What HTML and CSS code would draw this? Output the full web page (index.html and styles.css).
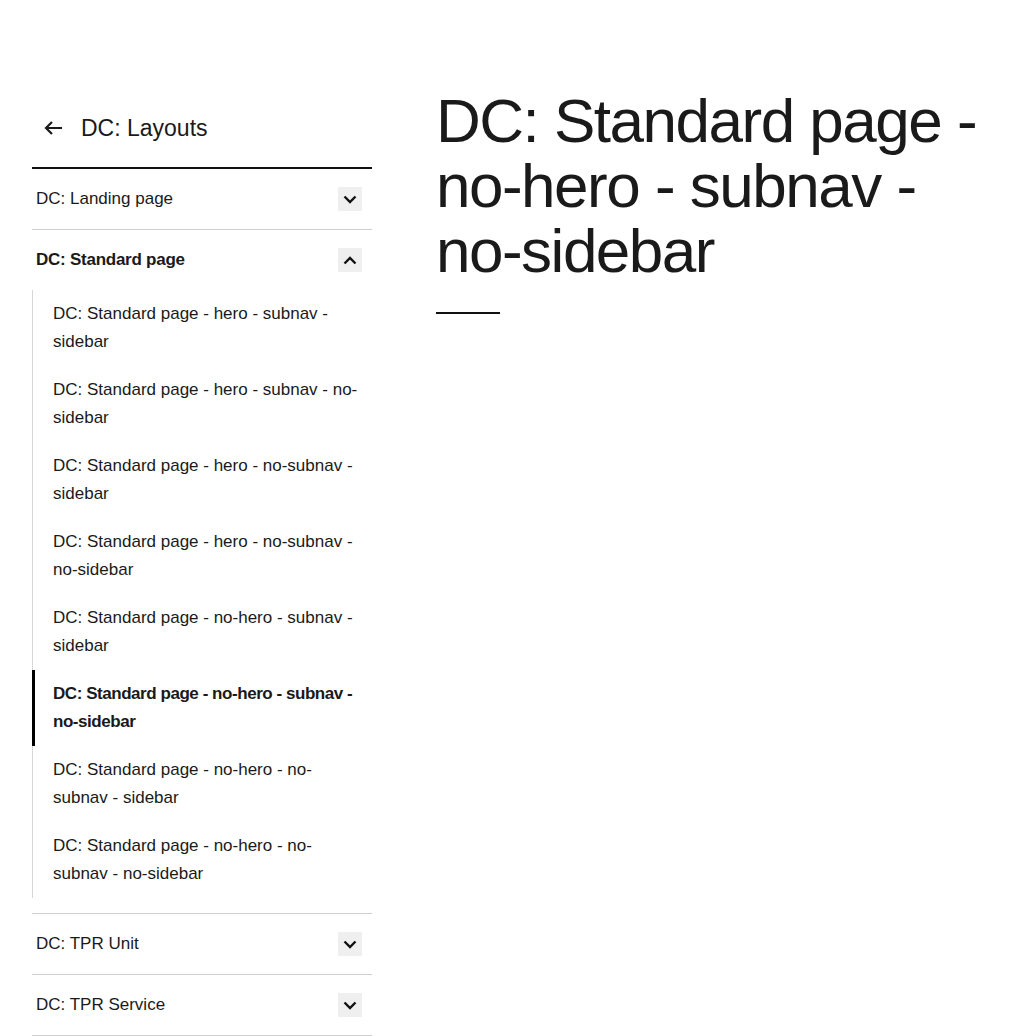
FILE: index.html
```html
<!DOCTYPE html>
<html lang="en">
<head>
<meta charset="utf-8">
<title>DC: Standard page - no-hero - subnav - no-sidebar</title>
<link rel="stylesheet" href="styles.css">
</head>
<body>
<div class="page">
  <aside class="sidebar">
    <a class="back" href="#">
      <svg class="back-icon" width="20" height="16" viewBox="0 0 20 16" aria-hidden="true"><path d="M19 8H3M9 2L3 8l6 6" fill="none" stroke="#1a1a1a" stroke-width="2.2"/></svg>
      <span>DC: Layouts</span>
    </a>
    <ul class="nav">
      <li class="nav-item">
        <div class="nav-row"><a href="#">DC: Landing page</a><span class="toggle"><svg width="14" height="9" viewBox="0 0 14 9"><path d="M1.5 1.5L7 7l5.5-5.5" fill="none" stroke="#111" stroke-width="2.4"/></svg></span></div>
      </li>
      <li class="nav-item open">
        <div class="nav-row"><a href="#" class="strong">DC: Standard page</a><span class="toggle"><svg width="14" height="9" viewBox="0 0 14 9"><path d="M1.5 7.5L7 2l5.5 5.5" fill="none" stroke="#111" stroke-width="2.4"/></svg></span></div>
        <ul class="subnav">
          <li><a href="#">DC: Standard page - hero - subnav - sidebar</a></li>
          <li><a href="#">DC: Standard page - hero - subnav - no-sidebar</a></li>
          <li><a href="#">DC: Standard page - hero - no-subnav - sidebar</a></li>
          <li><a href="#">DC: Standard page - hero - no-subnav - no-sidebar</a></li>
          <li><a href="#">DC: Standard page - no-hero - subnav - sidebar</a></li>
          <li class="active"><a href="#">DC: Standard page - no-hero - subnav - no-sidebar</a></li>
          <li><a href="#">DC: Standard page - no-hero - no-subnav - sidebar</a></li>
          <li><a href="#">DC: Standard page - no-hero - no-subnav - no-sidebar</a></li>
        </ul>
      </li>
      <li class="nav-item">
        <div class="nav-row"><a href="#">DC: TPR Unit</a><span class="toggle"><svg width="14" height="9" viewBox="0 0 14 9"><path d="M1.5 1.5L7 7l5.5-5.5" fill="none" stroke="#111" stroke-width="2.4"/></svg></span></div>
      </li>
      <li class="nav-item">
        <div class="nav-row"><a href="#">DC: TPR Service</a><span class="toggle"><svg width="14" height="9" viewBox="0 0 14 9"><path d="M1.5 1.5L7 7l5.5-5.5" fill="none" stroke="#111" stroke-width="2.4"/></svg></span></div>
      </li>
    </ul>
  </aside>
  <main class="content">
    <h1>DC: Standard page - no-hero - subnav - no-sidebar</h1>
    <hr class="rule">
  </main>
</div>
</body>
</html>
```
FILE: styles.css
```css
* { box-sizing: border-box; }
html, body { margin: 0; padding: 0; background: #fff; }
body {
  font-family: "Liberation Sans", Arial, sans-serif;
  color: #1a1a1a;
}
a { color: inherit; text-decoration: none; }
ul { list-style: none; margin: 0; padding: 0; }

.page {
  display: flex;
  gap: 64px;
  padding: 88px 0 0 32px;
}
.sidebar {
  width: 340px;
  flex: none;
}
.back {
  display: flex;
  align-items: center;
  gap: 18px;
  height: 81px;
  padding-left: 11px;
  padding-top: 1px;
  font-size: 23px;
  border-bottom: 2px solid #111;
}
.back-icon { display: block; }

.nav-item { border-bottom: 1px solid #cfcfcf; }
.nav-row {
  display: flex;
  align-items: center;
  justify-content: space-between;
  height: 60px;
  padding: 0 10px 0 4px;
  font-size: 17px;
}
.strong { font-weight: 700; letter-spacing: -0.25px; }
.toggle {
  width: 24px;
  height: 24px;
  background: #efefef;
  display: flex;
  align-items: center;
  justify-content: center;
}
.toggle svg { display: block; }

.open { padding-bottom: 15px; }
.subnav {
  border-left: 1px solid #d6d6d6;
}
.subnav li {
  padding: 10px 8px 10px 20px;
  font-size: 17px;
  line-height: 28px;
  min-height: 76px;
}
.subnav li.active {
  font-weight: 700;
  letter-spacing: -0.45px;
  border-left: 3px solid #000;
  margin-left: -1px;
  padding-left: 18px;
  padding-right: 4px;
}

.content {
  flex: 1;
  padding-right: 40px;
}
h1 {
  margin: 0;
  font-size: 62px;
  line-height: 65px;
  font-weight: 400;
  letter-spacing: -1.5px;
}
.rule {
  margin: 29px 0 0;
  width: 64px;
  border: 0;
  border-top: 2px solid #111;
}
```
